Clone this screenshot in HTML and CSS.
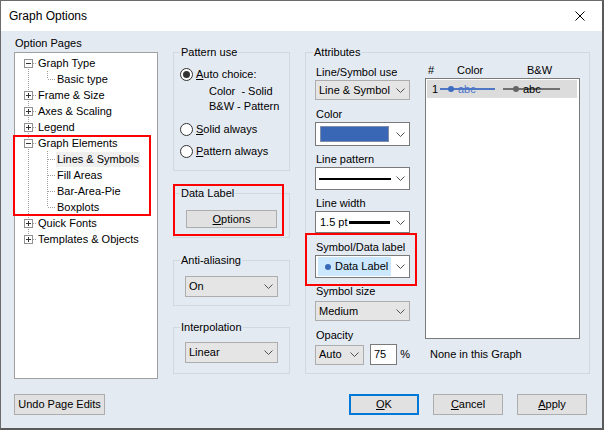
FILE: index.html
```html
<!DOCTYPE html>
<html lang="en">
<head>
<meta charset="utf-8">
<title>Graph Options</title>
<link rel="stylesheet" href="styles.css">
</head>
<body>
<div class="window">
  <div class="titlebar">
    <span class="title">Graph Options</span>
    <svg class="close" width="10" height="10" viewBox="0 0 10 10"><path d="M0.5 0.5L9.5 9.5M9.5 0.5L0.5 9.5"/></svg>
  </div>
  <div class="content">
    <div class="main">
      <div class="pages">
        <div class="pages-label">Option Pages</div>
        <div class="tree">
          <div class="node"><svg class="gut" width="22" height="16"><path class="tl" d="M13.5 12V16M18 8.5H22"/><rect class="bx" x="9.5" y="4.5" width="8" height="8"/><path class="sg" d="M11 8.5H16"/></svg><span class="ntext">Graph Type</span></div>
          <div class="node"><svg class="gut" width="41" height="16"><path class="tl" d="M13.5 0V16M32.5 0V8M33 8.5H41"/></svg><span class="ntext">Basic type</span></div>
          <div class="node"><svg class="gut" width="22" height="16"><path class="tl" d="M13.5 0V4M13.5 12V16M18 8.5H22"/><rect class="bx" x="9.5" y="4.5" width="8" height="8"/><path class="sg" d="M11 8.5H16M13.5 6V11"/></svg><span class="ntext">Frame &amp; Size</span></div>
          <div class="node"><svg class="gut" width="22" height="16"><path class="tl" d="M13.5 0V4M13.5 12V16M18 8.5H22"/><rect class="bx" x="9.5" y="4.5" width="8" height="8"/><path class="sg" d="M11 8.5H16M13.5 6V11"/></svg><span class="ntext">Axes &amp; Scaling</span></div>
          <div class="node"><svg class="gut" width="22" height="16"><path class="tl" d="M13.5 0V4M13.5 12V16M18 8.5H22"/><rect class="bx" x="9.5" y="4.5" width="8" height="8"/><path class="sg" d="M11 8.5H16M13.5 6V11"/></svg><span class="ntext">Legend</span></div>
          <div class="node"><svg class="gut" width="22" height="16"><path class="tl" d="M13.5 0V4M13.5 12V16M18 8.5H22"/><rect class="bx" x="9.5" y="4.5" width="8" height="8"/><path class="sg" d="M11 8.5H16"/></svg><span class="ntext">Graph Elements</span></div>
          <div class="node"><svg class="gut" width="41" height="16"><path class="tl" d="M13.5 0V16M32.5 0V16M33 8.5H41"/></svg><span class="ntext selected">Lines &amp; Symbols</span></div>
          <div class="node"><svg class="gut" width="41" height="16"><path class="tl" d="M13.5 0V16M32.5 0V16M33 8.5H41"/></svg><span class="ntext">Fill Areas</span></div>
          <div class="node"><svg class="gut" width="41" height="16"><path class="tl" d="M13.5 0V16M32.5 0V16M33 8.5H41"/></svg><span class="ntext">Bar-Area-Pie</span></div>
          <div class="node"><svg class="gut" width="41" height="16"><path class="tl" d="M13.5 0V16M32.5 0V8M33 8.5H41"/></svg><span class="ntext">Boxplots</span></div>
          <div class="node"><svg class="gut" width="22" height="16"><path class="tl" d="M13.5 0V4M13.5 12V16M18 8.5H22"/><rect class="bx" x="9.5" y="4.5" width="8" height="8"/><path class="sg" d="M11 8.5H16M13.5 6V11"/></svg><span class="ntext">Quick Fonts</span></div>
          <div class="node"><svg class="gut" width="22" height="16"><path class="tl" d="M13.5 0V4M18 8.5H22"/><rect class="bx" x="9.5" y="4.5" width="8" height="8"/><path class="sg" d="M11 8.5H16M13.5 6V11"/></svg><span class="ntext">Templates &amp; Objects</span></div>
        </div>
      </div>

      <div class="middle">
        <fieldset class="group g-pattern">
          <legend>Pattern use</legend>
          <div class="radio-row"><svg class="radio" width="13" height="13" viewBox="0 0 13 13"><circle class="ring" cx="6.5" cy="6.5" r="6"/><circle class="pip" cx="6.5" cy="6.5" r="3.5"/></svg><span><u>A</u>uto choice:</span></div>
          <div class="sub sub-first">Color&nbsp; - Solid</div>
          <div class="sub">B&amp;W - Pattern</div>
          <div class="radio-row r-solid"><svg class="radio" width="13" height="13" viewBox="0 0 13 13"><circle class="ring" cx="6.5" cy="6.5" r="6"/></svg><span><u>S</u>olid always</span></div>
          <div class="radio-row r-pattern"><svg class="radio" width="13" height="13" viewBox="0 0 13 13"><circle class="ring" cx="6.5" cy="6.5" r="6"/></svg><span><u>P</u>attern always</span></div>
        </fieldset>

        <fieldset class="group g-data">
          <legend>Data Label</legend>
          <div class="btn btn-options"><span><u>O</u>ptions</span></div>
        </fieldset>

        <fieldset class="group g-anti">
          <legend>Anti-aliasing</legend>
          <div class="combo combo-mid"><span>On</span><svg class="chev" width="9" height="5" viewBox="0 0 9 5"><path d="M0.5 0.5L4.5 4.5L8.5 0.5"/></svg></div>
        </fieldset>

        <fieldset class="group g-interp">
          <legend>Interpolation</legend>
          <div class="combo combo-mid"><span>Linear</span><svg class="chev" width="9" height="5" viewBox="0 0 9 5"><path d="M0.5 0.5L4.5 4.5L8.5 0.5"/></svg></div>
        </fieldset>
      </div>

      <fieldset class="group attributes">
        <legend>Attributes</legend>
        <div class="attr-body">
          <div class="controls">
            <div class="lbl lbl-first">Line/Symbol use</div>
            <div class="combo h20"><span>Line &amp; Symbol</span><svg class="chev" width="9" height="5" viewBox="0 0 9 5"><path d="M0.5 0.5L4.5 4.5L8.5 0.5"/></svg></div>

            <div class="lbl mt7">Color</div>
            <div class="combo white h24 pad4"><span class="swatch"></span><svg class="chev" width="9" height="5" viewBox="0 0 9 5"><path d="M0.5 0.5L4.5 4.5L8.5 0.5"/></svg></div>

            <div class="lbl mt6">Line pattern</div>
            <div class="combo white h23"><span class="pline"></span><svg class="chev" width="9" height="5" viewBox="0 0 9 5"><path d="M0.5 0.5L4.5 4.5L8.5 0.5"/></svg></div>

            <div class="lbl mt6">Line width</div>
            <div class="combo white h22 pad4"><span class="lw">1.5 pt<span class="lw-line"></span></span><svg class="chev" width="9" height="5" viewBox="0 0 9 5"><path d="M0.5 0.5L4.5 4.5L8.5 0.5"/></svg></div>

            <div class="lbl mt7">Symbol/Data label</div>
            <div class="combo white h23 pad2"><span class="hl"><span class="hl-dot"></span>Data Label</span><svg class="chev" width="9" height="5" viewBox="0 0 9 5"><path d="M0.5 0.5L4.5 4.5L8.5 0.5"/></svg></div>

            <div class="lbl mt6">Symbol size</div>
            <div class="combo h20 mt2"><span>Medium</span><svg class="chev" width="9" height="5" viewBox="0 0 9 5"><path d="M0.5 0.5L4.5 4.5L8.5 0.5"/></svg></div>

            <div class="lbl mt7">Opacity</div>
            <div class="opacity-row">
              <div class="combo h20 combo-auto"><span>Auto</span><svg class="chev" width="9" height="5" viewBox="0 0 9 5"><path d="M0.5 0.5L4.5 4.5L8.5 0.5"/></svg></div>
              <div class="num">75</div>
              <span class="pct">%</span>
            </div>
          </div>

          <div class="listcol">
            <div class="lhead"><span class="h-num">#</span><span class="h-color">Color</span><span>B&amp;W</span></div>
            <div class="listbox">
              <div class="lrow">
                <span class="lnum">1</span>
                <span class="sample s-color"><span class="sdot"></span>abc</span>
                <span class="sample s-bw"><span class="sdot"></span>abc</span>
              </div>
            </div>
            <div class="none-note">None in this Graph</div>
          </div>
        </div>
      </fieldset>
    </div>

    <div class="footer">
      <div class="btn btn-undo">Undo Page Edits</div>
      <div class="right-btns">
        <div class="btn btn-std btn-default"><span><u>O</u>K</span></div>
        <div class="btn btn-std"><span><u>C</u>ancel</span></div>
        <div class="btn btn-std"><span><u>A</u>pply</span></div>
      </div>
    </div>
  </div>
</div>

<div class="mark mark-tree"></div>
<div class="mark mark-data"></div>
<div class="mark mark-symbol"></div>
</body>
</html>
```

FILE: styles.css
```css
* { box-sizing: border-box; }

html, body {
  margin: 0;
  padding: 0;
}

body {
  width: 604px;
  height: 430px;
  overflow: hidden;
  background: #e4eaf2;
  font-family: "Liberation Sans", Arial, sans-serif;
  font-size: 11px;
  line-height: 15px;
  color: #000;
}

.window {
  width: 604px;
  height: 430px;
  border: 1px solid #6b6b6b;
  border-right: 2px solid #5a5a5a;
  border-bottom: 2px solid #5a5a5a;
  background: #e4eaf2;
  display: flex;
  flex-direction: column;
}

.titlebar {
  flex: none;
  height: 30px;
  background: #fff;
  display: flex;
  align-items: center;
  justify-content: space-between;
  padding: 0 17px 0 8px;
  font-size: 12px;
}

.close path {
  stroke: #000;
  stroke-width: 1;
  fill: none;
}

.content {
  flex: 1;
  display: flex;
  flex-direction: column;
  padding: 5px 15px 0 13px;
}

.main {
  display: flex;
  gap: 15px;
  align-items: flex-start;
}

/* ---------- option pages tree ---------- */
.pages {
  flex: none;
  width: 144px;
}

.pages-label {
  padding-left: 1px;
  margin-bottom: 1px;
}

.tree {
  height: 327px;
  background: #fff;
  border: 1px solid #a0a0a0;
  padding-top: 2px;
}

.node {
  display: flex;
  align-items: center;
  height: 16px;
}

.gut {
  flex: none;
  display: block;
}

.tl {
  stroke: #a0a0a0;
  stroke-dasharray: 1 1;
  fill: none;
  shape-rendering: crispEdges;
}

.bx {
  fill: #fff;
  stroke: #919191;
  shape-rendering: crispEdges;
}

.sg {
  stroke: #333;
  fill: none;
  shape-rendering: crispEdges;
}

.ntext {
  padding: 0 1px;
  line-height: 15px;
  white-space: nowrap;
}

.ntext.selected {
  background: #efefef;
}

/* ---------- group boxes ---------- */
.group {
  margin: 0;
  min-width: 0;
  border: 1px solid #d2d8e0;
}

.group legend {
  padding: 0 1px;
  line-height: 15px;
}

.middle {
  flex: none;
  width: 117px;
  padding-top: 9px;
  display: flex;
  flex-direction: column;
}

.g-pattern {
  padding: 6px 5px 11px 6px;
}

.radio-row {
  display: flex;
  align-items: center;
  height: 16px;
  gap: 3px;
  white-space: nowrap;
}

.radio {
  flex: none;
  display: block;
}

.radio .ring {
  fill: #fff;
  stroke: #333;
}

.radio .pip {
  fill: #333;
}

.sub {
  padding-left: 29px;
  white-space: nowrap;
}

.sub-first { margin-top: 2px; }
.r-solid { margin-top: 7px; }
.r-pattern { margin-top: 6px; }

.g-data {
  margin-top: 15px;
  padding: 9px 5px 9px 6px;
}

.g-anti {
  margin-top: 15px;
  padding: 8px 5px 8px 6px;
}

.g-interp {
  margin-top: 14px;
  padding: 7px 5px 10px 6px;
}

/* ---------- buttons ---------- */
.btn {
  display: flex;
  align-items: center;
  justify-content: center;
  height: 21px;
  border: 1px solid #adadad;
  background: #e1e1e1;
  white-space: nowrap;
}

.btn-options {
  width: 91px;
  height: 18px;
  margin-left: 6px;
}

.btn-undo {
  width: 91px;
}

.btn-std {
  width: 70px;
}

.btn-default {
  border: 2px solid #0078d7;
}

/* ---------- combos ---------- */
.combo {
  display: flex;
  align-items: center;
  justify-content: space-between;
  border: 1px solid #adadad;
  background: #e5e5e5;
  padding: 0 4px 0 3px;
  height: 20px;
  white-space: nowrap;
}

.combo.white {
  background: #fff;
  border-color: #7a7a7a;
}

.combo-mid {
  width: 93px;
  height: 21px;
  margin-left: 5px;
}

.chev {
  flex: none;
  display: block;
}

.chev path {
  stroke: #505050;
  fill: none;
}

.h20 { height: 20px; }
.h22 { height: 22px; }
.h23 { height: 23px; }
.h24 { height: 24px; }
.pad4 { padding-left: 4px; }
.pad2 { padding-left: 2px; }
.mt2 { margin-top: 2px; }
.mt6 { margin-top: 6px; }
.mt7 { margin-top: 7px; }

/* ---------- attributes ---------- */
.attributes {
  flex: none;
  width: 285px;
  margin-top: 9px;
  padding: 0 9px 8px 7px;
}

.attr-body {
  display: flex;
  gap: 15px;
  padding-left: 2px;
  align-items: flex-start;
}

.controls {
  flex: none;
  width: 95px;
}

.lbl {
  padding-left: 1px;
  white-space: nowrap;
}

.lbl-first { margin-top: 5px; }

.swatch {
  width: 69px;
  height: 16px;
  background: #3967b5;
  border: 1px solid #7f8ea8;
}

.pline {
  width: 72px;
  height: 2px;
  background: #000;
}

.lw {
  flex: 1;
  display: flex;
  align-items: center;
}

.lw-line {
  width: 41px;
  height: 3px;
  background: #000;
  margin-left: auto;
  margin-right: 6px;
}

.hl {
  display: flex;
  align-items: center;
  width: 73px;
  height: 19px;
  padding-left: 7px;
  background: #cce8ff;
}

.hl-dot {
  width: 6px;
  height: 6px;
  border-radius: 50%;
  background: #3a69b8;
  margin-right: 4px;
}

.opacity-row {
  display: flex;
  align-items: center;
  margin-top: 1px;
}

.combo-auto {
  width: 54px;
}

.num {
  width: 30px;
  height: 21px;
  margin-left: 6px;
  border: 1px solid #7a7a7a;
  background: #fff;
  padding-left: 3px;
  line-height: 19px;
}

.pct {
  margin-left: 3px;
}

.listcol {
  flex: none;
  width: 155px;
}

.lhead {
  display: flex;
  margin-top: 3px;
  white-space: nowrap;
}

.h-num {
  width: 32px;
  padding-left: 3px;
}

.h-color {
  width: 70px;
}

.listbox {
  height: 261px;
  border: 1px solid #7a7a7a;
  background: #fff;
  padding: 1px 2px 0 1px;
}

.lrow {
  display: flex;
  align-items: center;
  height: 18px;
  background: #dcdcdc;
}

.lnum {
  width: 13px;
  padding-left: 5px;
}

.sample {
  display: flex;
  align-items: center;
  height: 18px;
  background-repeat: no-repeat;
  background-position: 0 8px;
  background-size: 100% 2px;
}

.sdot {
  width: 6px;
  height: 6px;
  border-radius: 50%;
  margin-right: 4px;
}

.s-color {
  width: 55px;
  padding-left: 8px;
  color: #4c76c9;
  background-image: linear-gradient(#4f77c6, #4f77c6);
}

.s-color .sdot {
  background: #3d6cc0;
}

.s-bw {
  width: 57px;
  padding-left: 10px;
  margin-left: 8px;
  color: #000;
  background-image: linear-gradient(#707070, #707070);
}

.s-bw .sdot {
  background: #666;
}

.none-note {
  margin-top: 8px;
  padding-left: 5px;
  white-space: nowrap;
}

/* ---------- footer ---------- */
.footer {
  display: flex;
  justify-content: space-between;
  margin-top: 15px;
}

.right-btns {
  display: flex;
  gap: 14px;
}

/* ---------- red annotation frames ---------- */
.mark {
  position: absolute;
  border: 2px solid #f00;
}

.mark-tree {
  left: 13px;
  top: 135px;
  width: 138px;
  height: 81px;
}

.mark-data {
  left: 173px;
  top: 184px;
  width: 111px;
  height: 52px;
}

.mark-symbol {
  left: 305px;
  top: 233px;
  width: 112px;
  height: 53px;
}
```
